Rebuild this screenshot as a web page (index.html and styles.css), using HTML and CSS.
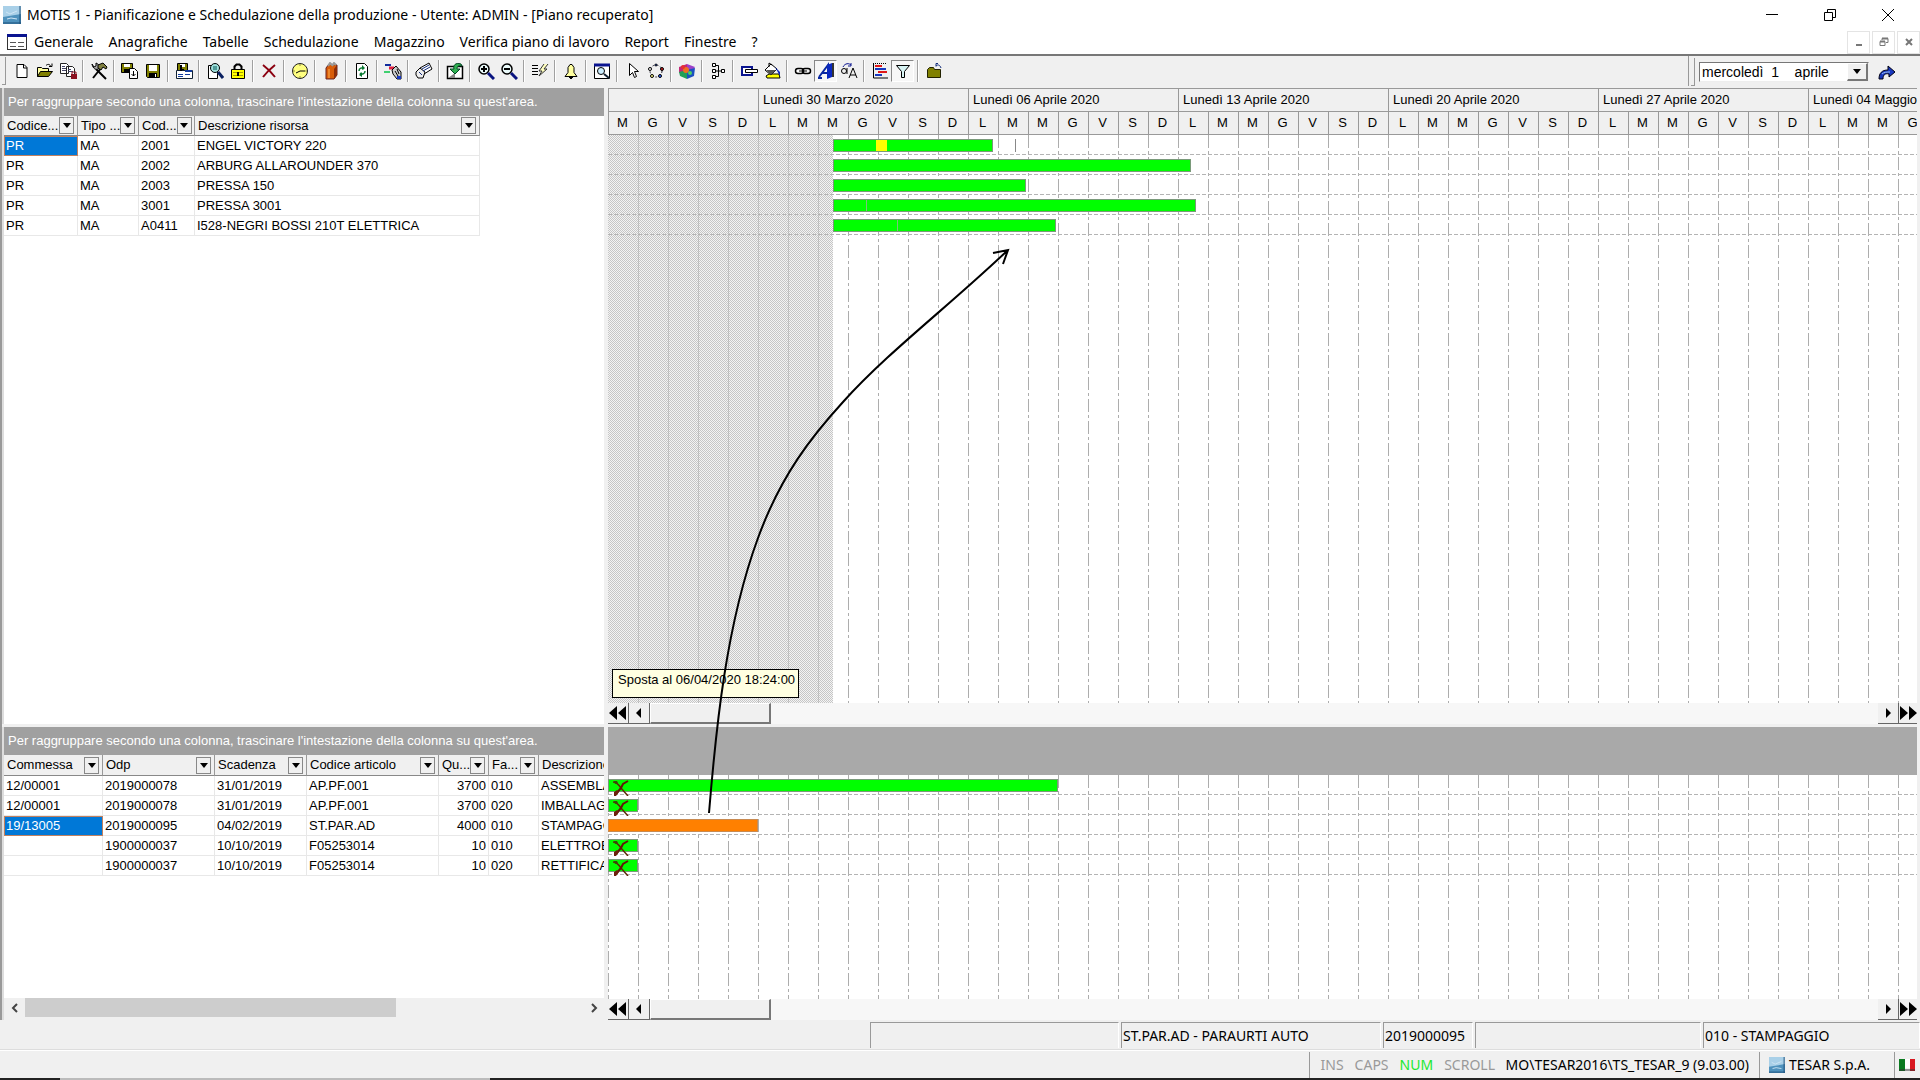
FILE: index.html
```html
<!DOCTYPE html>
<html lang="it">
<head>
<meta charset="utf-8">
<title>MOTIS 1 - Pianificazione e Schedulazione della produzione</title>
<link rel="stylesheet" href="styles.css">
</head>
<body>
<svg class="defs" aria-hidden="true">
  <symbol id="i-app" viewBox="0 0 18 18"><rect width="18" height="18" fill="#4f92bd"/><path d="M0 0h18v8L0 11z" fill="#a9d0e8"/><path d="M3 6l4 2 7-3M4 13l4-1 6 1" stroke="#cfe6f5" fill="none"/><path d="M0 17h18M17 0v18" stroke="#1d4f78" stroke-width="1"/></symbol>
  <symbol id="i-down" viewBox="0 0 8 5"><path d="M0 0h8L4 5z" fill="#000"/></symbol>
  <symbol id="i-tools" viewBox="0 0 18 16"><path d="M1 2c4 0 6 3 8 6l7 8" stroke="#5e2a08" stroke-width="1.500" fill="none"/><path d="M16 1l-5 3-2 4-5 6" stroke="#5e1a08" stroke-width="2" fill="none"/><path d="M2 12l3-2 2 2-3 4H2z" fill="#6e200c"/><path d="M2 1h3l1 2-3 1z" fill="#3a4a08"/></symbol>
  <symbol id="i-lens" viewBox="0 0 18 18"><circle cx="7" cy="7" r="5" fill="#eafafa" stroke="#000" stroke-width="1.500"/><path d="M11 11l6 6" stroke="#0a1480" stroke-width="3"/></symbol>
</svg>

<header class="titlebar">
  <svg class="app-icon"><use href="#i-app"/></svg>
  <h1>MOTIS 1 - Pianificazione e Schedulazione della produzione - Utente: ADMIN - [Piano recuperato]</h1>
  <div class="window-buttons">
    <button aria-label="Riduci a icona"><svg viewBox="0 0 12 12"><path d="M0 5.500h12" stroke="#000"/></svg></button>
    <button aria-label="Ripristina"><svg viewBox="0 0 12 12"><path d="M.5 3.500h8v8h-8zM3.500 3V.5h8v8H9" stroke="#000" fill="none"/></svg></button>
    <button aria-label="Chiudi"><svg viewBox="0 0 12 12"><path d="M0 0l12 12M12 0L0 12" stroke="#000"/></svg></button>
  </div>
</header>

<nav class="menubar">
  <svg class="menu-icon" viewBox="0 0 20 16"><rect x=".5" y=".5" width="19" height="15" fill="#fff" stroke="#333"/><path d="M0 1.500h20" stroke="#0a1490" stroke-width="3"/><path d="M3 8.500h6M11 8.500h6M3 12.500h6M11 12.500h6" stroke="#555"/></svg>
  <button>Generale</button><button>Anagrafiche</button><button>Tabelle</button><button>Schedulazione</button><button>Magazzino</button><button>Verifica piano di lavoro</button><button>Report</button><button>Finestre</button><button>?</button>
  <div class="mdi-buttons">
    <button aria-label="Riduci finestra"><svg viewBox="0 0 10 10"><path d="M2 8h6" stroke="#777" stroke-width="2"/></svg></button>
    <button aria-label="Ripristina finestra"><svg viewBox="0 0 10 10"><path d="M1 4.500h5v4H1zM3 3V1.500h6v4H7" stroke="#777" fill="none"/><path d="M1 4.500h5M3 1.500h6" stroke="#777" stroke-width="2"/></svg></button>
    <button aria-label="Chiudi finestra"><svg viewBox="0 0 10 10"><path d="M2 2l6 6M8 2L2 8" stroke="#777" stroke-width="2"/></svg></button>
  </div>
</nav>

<div class="toolbar">
  <span class="grip"></span>
  <button aria-label="Nuovo"><svg viewBox="0 0 18 18"><path d="M4 2.500h7l3 3v10H4z" fill="#fff" stroke="#000"/><path d="M10.500 3v3H14" stroke="#000" fill="none"/></svg></button>
  <button aria-label="Apri"><svg viewBox="0 0 18 18"><path d="M1.500 14.500v-9h4l1 1h6v3" fill="#ffffa0" stroke="#000"/><path d="M1.500 14.500l3-5h12l-4 5z" fill="#808000" stroke="#000"/><path d="M10 3.500c2-2 4-1 5 1m1-3v3h-3" stroke="#000" fill="none"/></svg></button>
  <button aria-label="Copia piano"><svg viewBox="0 0 18 18"><path d="M1.500 1.500h6l2 2v8h-8zM7.500 4.500h6l2 2v8h-8z" fill="#fff" stroke="#222"/><path d="M3 4.500h3M3 6.500h4M3 8.500h4M9 7.500h3M9 9.500h5" stroke="#446"/><path d="M12 12h6v5h-6z" fill="#8b1020"/><path d="M13 12v-2h4v2" stroke="#8b1020" fill="none"/></svg></button>
  <span class="sep"></span>
  <button aria-label="Strumenti"><svg viewBox="0 0 18 18"><path d="M6 7l10 10" stroke="#000" stroke-width="2"/><path d="M2 2l2 3 2-1V1c3 1 4 4 2 6-2 1-5 0-6-5z" fill="#aaa" stroke="#000"/><path d="M11 6L3 16" stroke="#000" stroke-width="2"/><path d="M8 3l5-2 4 4-1 2-3-2-2 3-3-2z" fill="#808040" stroke="#000"/></svg></button>
  <span class="sep"></span>
  <button aria-label="Salva con nome"><svg viewBox="0 0 18 18"><path d="M.5 1.500h11v9H.5z" fill="#808000" stroke="#000"/><path d="M3 2h6v3H3z" fill="#fff"/><path d="M3 7h5v4H3z"/><path d="M8.500 6.500h5l3 3v7h-8z" fill="#fff" stroke="#000"/><path d="M12.500 9v5m-2-2l2 2 2-2" stroke="#000" fill="none"/></svg></button>
  <button aria-label="Salva"><svg viewBox="0 0 18 18"><path d="M2.500 2.500h13v13h-12l-1-1z" fill="#808000" stroke="#000"/><path d="M5 3h8v6H5z" fill="#fff"/><path d="M5 11h8v5H5z"/><path d="M11 12h1v3h-1z" fill="#fff"/></svg></button>
  <span class="sep"></span>
  <button aria-label="Salva vista"><svg viewBox="0 0 18 18"><path d="M2.500 1.500h10v9h-10z" fill="#808000" stroke="#000"/><path d="M5 2h5v3H5z" fill="#fff"/><path d="M5 7h4v3H5z"/><path d="M1.500 8.500h16v8h-16z" fill="#fff" stroke="#123"/><path d="M10 9h7" stroke="#123c9c" stroke-width="2"/><path d="M3 12.500h5M10 12.500h5M3 14.500h5" stroke="#123c9c"/><path d="M5 3h2v6H5z"/></svg></button>
  <span class="sep"></span>
  <button aria-label="Cerca"><svg viewBox="0 0 18 18"><path d="M2.500 3.500h9v13h-9z" fill="#fff" stroke="#000"/><circle cx="9" cy="6" r="4.500" fill="#9fe0dc" stroke="#000"/><path d="M7 5h4M7 7h4" stroke="#055"/><path d="M12 10l5 6" stroke="#0a2060" stroke-width="3"/></svg></button>
  <button aria-label="Blocca"><svg viewBox="0 0 18 18"><path d="M5.500 8V4.500l2-2h3l2 2V8" stroke="#000" stroke-width="2" fill="none"/><path d="M2.500 7.500h13v9h-13z" fill="#ff0" stroke="#000"/><path d="M4 10.500h10M4 13.500h10" stroke="#a8a000"/><path d="M8 10h2v4H8z"/></svg></button>
  <span class="sep"></span>
  <button aria-label="Elimina"><svg viewBox="0 0 18 18"><path d="M3 3c4 3 8 7 12 12M15 3C10 7 6 11 3 15" stroke="#8b0010" stroke-width="2" fill="none"/></svg></button>
  <span class="sep"></span>
  <button aria-label="Orario"><svg viewBox="0 0 18 18"><circle cx="9" cy="9" r="7.500" fill="#ffff80" stroke="#222"/><path d="M5 11l4-2h5" stroke="#000" fill="none"/><path d="M9 2v2M9 14v2M2 9h2M14 9h2" stroke="#884"/></svg></button>
  <span class="sep"></span>
  <button aria-label="Rubrica"><svg viewBox="0 0 18 18"><path d="M4 6l3-4 8 1v10l-3 4H4z" fill="#d85c08" stroke="#622"/><path d="M12 7v10l3-4V3z" fill="#8c2c08"/><path d="M6 4l2-3 2 2M10 4l2-3 2 2" stroke="#999" stroke-width="2" fill="none"/><path d="M7 7v9" stroke="#ffb050"/></svg></button>
  <span class="sep"></span>
  <button aria-label="Aggiorna"><svg viewBox="0 0 18 18"><path d="M3.500 1.500h8l3 3v12h-11z" fill="#fff" stroke="#000"/><path d="M6 9c0-3 3-4 5-2M12 9c0 3-3 4-5 2" stroke="#087830" stroke-width="1.500" fill="none"/><path d="M9 3v5l3-2M9 10v5l-3-2" fill="#087830"/></svg></button>
  <span class="sep"></span>
  <button aria-label="Sposta attività"><svg viewBox="0 0 18 18"><path d="M1 3h6" stroke="#112c9c" stroke-width="2"/><path d="M5 6h5" stroke="#e02040" stroke-width="3"/><path d="M0 10h6" stroke="#40d070" stroke-width="2"/><path d="M8 8l4-4 5 6v7h-4l-4-5z" fill="#ccc" stroke="#000"/><path d="M11 9l3 5M13 7l2 5" stroke="#000"/><path d="M13 14h4v3h-4z" fill="#1838c0"/></svg></button>
  <span class="sep"></span>
  <button aria-label="Assegna"><svg viewBox="0 0 18 18"><path d="M5 6l9-5 3 6-8 5z" fill="#fff" stroke="#000"/><path d="M1 10l4-4 5 4-2 6H3l-2-3z" fill="#eee" stroke="#000"/><path d="M7 7l7-4M8 9l7-4M4 10l3 3" stroke="#112c7c"/></svg></button>
  <span class="sep"></span>
  <button aria-label="Importa"><svg viewBox="0 0 18 18"><path d="M1.500 4.500h15v12h-15z" fill="#fff" stroke="#000" stroke-width="1.500"/><path d="M2 16l7-5v5z" fill="#888"/><path d="M15 2C9 0 7 4 8 7H4l5 5 5-5h-3c0-2 1-4 5-3z" fill="#30b050" stroke="#042"/></svg></button>
  <span class="sep"></span>
  <button aria-label="Ingrandisci"><svg viewBox="0 0 18 18"><use href="#i-lens"/><path d="M4 7h6M7 4v6" stroke="#000" stroke-width="2"/></svg></button>
  <button aria-label="Rimpicciolisci"><svg viewBox="0 0 18 18"><use href="#i-lens"/><path d="M4 7h6" stroke="#000" stroke-width="2"/></svg></button>
  <span class="sep"></span>
  <button aria-label="Schedula"><svg viewBox="0 0 18 18"><path d="M1 3.500h6M1 6.500h6M1 9.500h6M1 12.500h6" stroke="#000"/><path d="M13 2l-5 7h3l-3 5 8-7h-3l4-5" fill="#ffffc0" stroke="#333"/></svg></button>
  <span class="sep"></span>
  <button aria-label="Avvisi"><svg viewBox="0 0 18 18"><path d="M8 2.500h2l2 3v5l3 4H3l3-4v-5z" fill="#ffffa0" stroke="#000"/><path d="M7 15h4l-2 2z" stroke="#000"/></svg></button>
  <span class="sep"></span>
  <button aria-label="Trova nel piano"><svg viewBox="0 0 18 18"><path d="M1.500 2.500h15v14h-15z" fill="#fff" stroke="#000"/><path d="M1 3h16" stroke="#0a1490" stroke-width="3"/><circle cx="8" cy="9" r="3.500" fill="#cef" stroke="#000"/><path d="M11 12l5 4" stroke="#123" stroke-width="2"/></svg></button>
  <span class="sep"></span>
  <button aria-label="Seleziona"><svg viewBox="0 0 18 18"><path d="M5.500 1.500v12l3-3 2 5 2-1-2-5h4z" fill="#fff" stroke="#000"/></svg></button>
  <button aria-label="Ciclo"><svg viewBox="0 0 18 18"><circle cx="9" cy="9" r="6" fill="none" stroke="#223" stroke-dasharray="2 2"/><g stroke="#000"><circle cx="9" cy="3" r="1" fill="#36f"/><circle cx="3" cy="7" r="1.500" fill="#fff"/><circle cx="15" cy="7" r="1.500" fill="#c22"/><circle cx="5" cy="14" r="1.500" fill="#ff8"/><circle cx="13" cy="14" r="1.500" fill="#36f"/></g></svg></button>
  <span class="sep"></span>
  <button aria-label="Colori"><svg viewBox="0 0 18 18"><path d="M1 5l8-3v7l-8 2z" fill="#c22878"/><path d="M9 2l8 3-4 6-4-2z" fill="#9c40c8"/><path d="M1 10l8-2v9l-7-3z" fill="#20a058"/><path d="M9 8l8-2-1 8-7 3z" fill="#1c50c0"/><circle cx="8" cy="8" r="3" fill="#ee7020"/><circle cx="12" cy="11" r="2" fill="#50d060"/><circle cx="5" cy="5" r="2" fill="#e83030"/></svg></button>
  <span class="sep"></span>
  <button aria-label="Struttura"><svg viewBox="0 0 18 18"><path d="M3.500 1.500h3v3h-3zM3.500 7.500h3v3h-3zM3.500 13.500h3v3h-3zM12.500 7.500h3v3h-3z" fill="#fff" stroke="#000"/><path d="M7 3.500h2.500v11H7M7 9h5" stroke="#000" fill="none"/></svg></button>
  <span class="sep"></span>
  <button aria-label="Barra"><svg viewBox="0 0 18 18"><path d="M2 5h10v8H2z" fill="#fff" stroke="#0a1490" stroke-width="2"/><path d="M5.500 7.500h12v3h-12z" fill="#fff" stroke="#000"/></svg></button>
  <button aria-label="Riempi"><svg viewBox="0 0 18 18"><path d="M3 14l3-2h10l1 4H4z" fill="#ff0" stroke="#000"/><path d="M2 8l6-6 6 5-6 6z" fill="#fff" stroke="#000"/><path d="M3 8h10l-5 5z" fill="#555"/><path d="M12 5l5 5v4z" fill="#0a28c0"/><path d="M6 5V1l3 2" stroke="#000" fill="none"/></svg></button>
  <span class="sep"></span>
  <button aria-label="Collega"><svg viewBox="0 0 18 18"><rect x="1.500" y="6.500" width="8" height="5" rx="2.500" fill="#fff" stroke="#000" stroke-width="1.500"/><rect x="8.500" y="6.500" width="8" height="5" rx="2.500" fill="none" stroke="#000" stroke-width="1.500"/><path d="M5 9h8" stroke="#000"/></svg></button>
  <button class="pressed" aria-label="Testo" aria-pressed="true"><svg viewBox="0 0 18 18"><path d="M1 16h4M2 15L11 3v12M5 11h6" stroke="#0a28a0" stroke-width="2" fill="none"/><path d="M10 3l5-2v14l-5 2z" fill="#0a28c0"/><path d="M15 1h2v14h-2z" fill="#333"/></svg></button>
  <button aria-label="Maiuscole"><svg viewBox="0 0 18 18"><path d="M3 5c2-4 6-4 8-2m0-2v3H8" stroke="#0a1490" fill="none"/><circle cx="4" cy="9" r="2.500" fill="none" stroke="#000"/><path d="M7 6v6M9 16l4-10 4 10M10 13h6" stroke="#000" fill="none"/></svg></button>
  <span class="sep"></span>
  <button aria-label="Diagramma"><svg viewBox="0 0 18 18"><path d="M2 1.500h14" stroke="#000" stroke-dasharray="1 1"/><path d="M2.500 2v14H17" stroke="#000" fill="none"/><path d="M4 4h7M7 10h9" stroke="#e01818" stroke-width="2"/><path d="M4 7h11M4 13h7" stroke="#1838c0" stroke-width="2"/></svg></button>
  <button class="pressed" aria-label="Filtro" aria-pressed="true"><svg viewBox="0 0 18 18"><path d="M2.500 3.500h13l-5 6v6h-3v-6z" fill="#d8f4f4" stroke="#000"/></svg></button>
  <span class="sep"></span>
  <button aria-label="Esci"><svg viewBox="0 0 18 18"><path d="M2.500 15.500v-8l2-2h4l1 2h6v8z" fill="#808000" stroke="#220"/><path d="M11 4c2-2 4-1 5 2M13 1.500h-2v3" stroke="#112c7c" fill="none"/></svg></button>

  <div class="date-group">
    <span class="grip"></span>
    <div class="date-box">
      <input type="text" aria-label="Data" value="mercoledì  1    aprile">
      <button aria-label="Apri calendario"><svg viewBox="0 0 8 5"><use href="#i-down"/></svg></button>
    </div>
    <button class="go" aria-label="Vai alla data"><svg viewBox="0 0 18 16"><path d="M1 15C1 9 4 6 10 6V2l7 6-6 5v-3c-4-1-6 1-6 5z" fill="#1838c0" stroke="#001"/><path d="M4 10c2-2 5-2 8-2" stroke="#9cc0f0" fill="none"/></svg></button>
  </div>
</div>

<main class="workspace">
  <section class="pane">
    <p class="group-hint">Per raggruppare secondo una colonna, trascinare l'intestazione della colonna su quest'area.</p>
    <table class="grid resources">
      <colgroup><col class="c74"><col class="c61"><col class="c56"><col class="c285"></colgroup>
      <thead><tr>
        <th><div>Codice...<button aria-label="Filtra codice"><svg><use href="#i-down"/></svg></button></div></th>
        <th><div>Tipo ...<button aria-label="Filtra tipo"><svg><use href="#i-down"/></svg></button></div></th>
        <th><div>Cod...<button aria-label="Filtra cod"><svg><use href="#i-down"/></svg></button></div></th>
        <th><div>Descrizione risorsa<button aria-label="Filtra descrizione"><svg><use href="#i-down"/></svg></button></div></th>
      </tr></thead>
      <tbody>
        <tr><td class="selected">PR</td><td>MA</td><td>2001</td><td>ENGEL VICTORY 220</td></tr>
        <tr><td>PR</td><td>MA</td><td>2002</td><td>ARBURG ALLAROUNDER 370</td></tr>
        <tr><td>PR</td><td>MA</td><td>2003</td><td>PRESSA 150</td></tr>
        <tr><td>PR</td><td>MA</td><td>3001</td><td>PRESSA 3001</td></tr>
        <tr><td>PR</td><td>MA</td><td>A0411</td><td>I528-NEGRI BOSSI 210T ELETTRICA</td></tr>
      </tbody>
    </table>
  </section>

  <section class="gantt">
    <div class="weeks"><span class="part"></span><span>Lunedì 30 Marzo 2020</span><span>Lunedì 06 Aprile 2020</span><span>Lunedì 13 Aprile 2020</span><span>Lunedì 20 Aprile 2020</span><span>Lunedì 27 Aprile 2020</span><span>Lunedì 04 Maggio</span></div>
    <div class="days"><span>M</span><span>G</span><span>V</span><span>S</span><span>D</span><span>L</span><span>M</span><span>M</span><span>G</span><span>V</span><span>S</span><span>D</span><span>L</span><span>M</span><span>M</span><span>G</span><span>V</span><span>S</span><span>D</span><span>L</span><span>M</span><span>M</span><span>G</span><span>V</span><span>S</span><span>D</span><span>L</span><span>M</span><span>M</span><span>G</span><span>V</span><span>S</span><span>D</span><span>L</span><span>M</span><span>M</span><span>G</span><span>V</span><span>S</span><span>D</span><span>L</span><span>M</span><span>M</span><span>G</span></div>
    <div class="chart past">
      <div class="lane"><i class="bar" style="margin-left:225px;width:160px"><b class="setup" style="margin-left:42px;width:11px"></b></i><i class="tick" style="margin-left:22px"></i></div>
      <div class="lane"><i class="bar" style="margin-left:225px;width:358px"></i></div>
      <div class="lane"><i class="bar" style="margin-left:225px;width:193px"></i></div>
      <div class="lane"><i class="bar" style="margin-left:225px;width:363px"><b class="split" style="margin-left:32px"></b></i></div>
      <div class="lane"><i class="bar" style="margin-left:225px;width:223px"><b class="split" style="margin-left:63px"></b></i></div>
      <div class="tooltip" role="tooltip">Sposta al 06/04/2020 18:24:00</div>
    </div>
    <div class="timescroll">
      <button aria-label="Inizio"><svg viewBox="0 0 18 14"><path d="M8 0v14L0 7zM17 0v14L9 7z"/></svg></button><button aria-label="Indietro"><svg viewBox="0 0 18 14"><path d="M11 2v10L6 7z"/></svg></button><span class="thumb"></span><button class="end" aria-label="Avanti"><svg viewBox="0 0 18 14"><path d="M7 2v10l5-5z"/></svg></button><button class="last" aria-label="Fine"><svg viewBox="0 0 18 14"><path d="M1 0v14l8-7zM10 0v14l8-7z"/></svg></button>
    </div>
  </section>

  <section class="pane">
    <p class="group-hint">Per raggruppare secondo una colonna, trascinare l'intestazione della colonna su quest'area.</p>
    <div class="grid-clip">
    <table class="grid orders">
      <colgroup><col class="c99"><col class="c112"><col class="c92"><col class="c132"><col class="c50"><col class="c50"><col class="c132"></colgroup>
      <thead><tr>
        <th><div>Commessa<button aria-label="Filtra commessa"><svg><use href="#i-down"/></svg></button></div></th>
        <th><div>Odp<button aria-label="Filtra odp"><svg><use href="#i-down"/></svg></button></div></th>
        <th><div>Scadenza<button aria-label="Filtra scadenza"><svg><use href="#i-down"/></svg></button></div></th>
        <th><div>Codice articolo<button aria-label="Filtra articolo"><svg><use href="#i-down"/></svg></button></div></th>
        <th><div>Qu...<button aria-label="Filtra quantità"><svg><use href="#i-down"/></svg></button></div></th>
        <th><div>Fa...<button aria-label="Filtra fase"><svg><use href="#i-down"/></svg></button></div></th>
        <th><div>Descrizione</div></th>
      </tr></thead>
      <tbody>
        <tr><td>12/00001</td><td>2019000078</td><td>31/01/2019</td><td>AP.PF.001</td><td class="num">3700</td><td>010</td><td>ASSEMBLAGGIO</td></tr>
        <tr><td>12/00001</td><td>2019000078</td><td>31/01/2019</td><td>AP.PF.001</td><td class="num">3700</td><td>020</td><td>IMBALLAGGIO</td></tr>
        <tr><td class="selected">19/13005</td><td>2019000095</td><td>04/02/2019</td><td>ST.PAR.AD</td><td class="num">4000</td><td>010</td><td>STAMPAGGIO</td></tr>
        <tr><td></td><td>1900000037</td><td>10/10/2019</td><td>F05253014</td><td class="num">10</td><td>010</td><td>ELETTROEROSIONE</td></tr>
        <tr><td></td><td>1900000037</td><td>10/10/2019</td><td>F05253014</td><td class="num">10</td><td>020</td><td>RETTIFICA</td></tr>
      </tbody>
    </table>
    </div>
    <div class="hscroll">
      <button aria-label="Scorri a sinistra"><svg viewBox="0 0 8 10"><path d="M6 1L2 5l4 4" stroke="#444" stroke-width="2" fill="none"/></svg></button><span class="thumb"></span><button class="end" aria-label="Scorri a destra"><svg viewBox="0 0 8 10"><path d="M2 1l4 4-4 4" stroke="#444" stroke-width="2" fill="none"/></svg></button>
    </div>
  </section>

  <section class="gantt">
    <div class="cover"></div>
    <div class="chart">
      <div class="lane"><i class="bar" style="width:450px"><svg><use href="#i-tools"/></svg></i></div>
      <div class="lane"><i class="bar" style="width:30px"><svg><use href="#i-tools"/></svg></i></div>
      <div class="lane"><i class="bar moving" style="width:150px"></i></div>
      <div class="lane"><i class="bar" style="width:30px"><svg><use href="#i-tools"/></svg></i></div>
      <div class="lane"><i class="bar" style="width:30px"><svg><use href="#i-tools"/></svg></i></div>
    </div>
    <div class="timescroll">
      <button aria-label="Inizio"><svg viewBox="0 0 18 14"><path d="M8 0v14L0 7zM17 0v14L9 7z"/></svg></button><button aria-label="Indietro"><svg viewBox="0 0 18 14"><path d="M11 2v10L6 7z"/></svg></button><span class="thumb"></span><button class="end" aria-label="Avanti"><svg viewBox="0 0 18 14"><path d="M7 2v10l5-5z"/></svg></button><button class="last" aria-label="Fine"><svg viewBox="0 0 18 14"><path d="M1 0v14l8-7zM10 0v14l8-7z"/></svg></button>
    </div>
  </section>

  <svg class="move-arrow" viewBox="700 240 320 580" aria-hidden="true"><path d="M709 813C716 728 726 625 758 538C781 475 812 436 843 402C888 352 948 307 1008 250M993 253l15-3-5 14" fill="none" stroke="#000" stroke-width="2"/></svg>
</main>

<footer>
  <div class="status plan"><span></span><span>ST.PAR.AD - PARAURTI AUTO</span><span>2019000095</span><span></span><span>010 - STAMPAGGIO</span></div>
  <div class="status system">
    <div class="keys"><span>INS</span><span>CAPS</span><span class="on">NUM</span><span>SCROLL</span></div>
    <div class="path"><span>MO\TESAR2016\TS_TESAR_9 (9.03.00)</span></div>
    <div class="company"><svg class="small-icon"><use href="#i-app"/></svg>TESAR S.p.A.</div>
    <div class="flag"><svg viewBox="0 0 16 12"><path d="M0 0h6v12H0z" fill="#0a7a20"/><path d="M6 0h5v9H6z" fill="#fff"/><path d="M11 0h5v12h-5z" fill="#d81820"/><path d="M0 11h16" stroke="#333"/></svg></div>
  </div>
  <div class="edge"></div>
</footer>
</body>
</html>
```
FILE: styles.css
```css
* { box-sizing: border-box; }
body {
  margin: 0;
  min-height: 100vh;
  display: flex;
  flex-direction: column;
  overflow: hidden;
  background: #f0f0f0;
  color: #000;
  font: 13px/20px "Liberation Sans", Arial, sans-serif;
}
button {
  margin: 0;
  padding: 0;
  border: 0;
  background: none;
  color: inherit;
  font: inherit;
  display: flex;
  align-items: center;
  justify-content: center;
}
.defs { display: none; }

/* Title and menu */
.titlebar, .menubar {
  display: flex;
  align-items: center;
  background: #fff;
  font-family: "Noto Sans", "Open Sans", sans-serif;
  font-size: 14px;
}
.titlebar { height: 30px; padding-left: 3px; }
.titlebar h1 { margin: 0 0 0 6px; font-size: 14px; font-weight: 400; white-space: nowrap; }
.app-icon { width: 18px; height: 18px; }
.window-buttons { display: flex; margin-left: auto; padding-right: 3px; }
.window-buttons button { width: 58px; height: 28px; }
.window-buttons svg { width: 12px; height: 12px; }
.menubar { height: 24px; padding-left: 7px; gap: 15px; white-space: nowrap; }
.menu-icon { width: 20px; height: 16px; margin-right: -8px; }
.mdi-buttons { display: flex; gap: 2px; margin-left: auto; }
.mdi-buttons button { width: 23px; height: 23px; border: 1px solid #e4e4e4; }
.mdi-buttons svg { width: 10px; height: 10px; }

/* Toolbar */
.toolbar {
  display: flex;
  align-items: center;
  height: 34px;
  border-top: 2px solid #777;
  padding: 0 0 2px 2px;
}
.toolbar > button { flex: none; width: 23px; height: 22px; }
.toolbar > button svg { width: 18px; height: 18px; }
.toolbar > .pressed { border: 1px solid #fff; border-top-color: #888; border-left-color: #888; background: #f7f7f7; }
.grip { width: 4px; height: 28px; margin-right: 4px; border-right: 1px solid #999; border-bottom: 1px solid #999; }
.sep { flex: none; width: 2px; height: 22px; margin: 0 3px; border-left: 1px solid #a0a0a0; border-right: 1px solid #fff; }
.date-group { display: flex; align-items: center; align-self: stretch; width: 232px; margin-left: auto; border-left: 1px solid #999; padding: 2px 0 0 2px; }
.date-box { display: flex; width: 170px; height: 20px; background: #fff; border: 1px solid #777; border-right-color: #eee; border-bottom-color: #eee; }
.date-box input { flex: 1; min-width: 0; border: 0; padding: 0 2px; background: none; font: 14px/18px "Liberation Sans", Arial, sans-serif; }
.date-box button { width: 21px; background: #f0f0f0; border: 1px solid #fff; border-right: 2px solid #777; border-bottom: 2px solid #777; }
.date-box svg { width: 8px; height: 5px; }
.go { margin-left: 9px; }
.go svg { width: 18px; height: 16px; }

/* Work area */
.workspace {
  position: relative;
  flex: 1;
  display: grid;
  grid-template-columns: 602px minmax(0, 1fr);
  grid-template-rows: minmax(0, 636fr) minmax(0, 293fr);
  gap: 3px 4px;
  padding-right: 3px;
  border-left: 2px solid #999;
}
.pane, .gantt { display: flex; flex-direction: column; min-width: 0; overflow: hidden; background: #fff; }
.pane { border-left: 2px solid #ddd; }
.group-hint { margin: 0; height: 28px; padding-left: 4px; background: #a0a0a0; color: #fff; line-height: 28px; white-space: nowrap; }
.grid-clip { flex: 1; overflow: hidden; }
.grid { border-collapse: separate; border-spacing: 0; table-layout: fixed; text-align: left; }
.resources { width: 476px; }
.orders { width: 667px; }
.c50 { width: 50px; } .c56 { width: 56px; } .c61 { width: 61px; } .c74 { width: 74px; }
.c92 { width: 92px; } .c99 { width: 99px; } .c112 { width: 112px; } .c132 { width: 132px; } .c285 { width: 285px; }
.grid th { padding: 0; background: #f0f0f0; border-right: 1px solid #999; border-bottom: 1px solid #888; font-weight: 400; white-space: nowrap; overflow: hidden; }
.grid th div { display: flex; align-items: center; height: 20px; padding: 0 3px; }
.resources th div { height: 19px; }
.grid th button { flex: none; width: 15px; height: 17px; margin-left: auto; border: 1px solid #888; background: #f0f0f0; }
.grid th svg { width: 8px; height: 5px; }
.grid td { height: 20px; padding: 0 2px; line-height: 19px; border-right: 1px solid #e8e8e8; border-bottom: 1px solid #e8e8e8; white-space: nowrap; overflow: hidden; }
.grid .selected { background: #0078d7; color: #fff; outline: 1px solid #c08060; outline-offset: -1px; }
.grid .num { text-align: right; }

.hscroll { display: flex; height: 22px; padding-bottom: 3px; background: #f0f0f0; }
.hscroll button { width: 21px; }
.hscroll svg { width: 8px; height: 10px; }
.hscroll .thumb { width: 371px; background: #cdcdcd; }
.hscroll .end { margin-left: auto; }

/* Timeline */
.weeks, .days { display: flex; overflow: hidden; background: #f0f0f0; white-space: nowrap; border-left: 1px solid #999; flex: none; }
.weeks { height: 24px; border-top: 1px solid #999; border-bottom: 1px solid #999; }
.weeks span { flex: none; width: 210px; padding-left: 4px; line-height: 22px; border-right: 1px solid #999; }
.weeks .part { width: 150px; }
.days { height: 23px; border-bottom: 1px solid #999; }
.days span { flex: none; width: 30px; padding-right: 2px; text-align: center; line-height: 22px; border-right: 1px solid #999; }
.cover { flex: none; height: 48px; background: #a9a9a9; }
.chart {
  position: relative;
  flex: 1;
  background:
    repeating-linear-gradient(to bottom, transparent 0 13px, #fff 13px 16px, transparent 16px 19px, #fff 19px 22px),
    linear-gradient(to right, #adadad 1px, transparent 1px) 0 0 / 30px 100%,
    #fff;
}
/* Days before the plan start are hatched, the rest of the chart is white */
.past {
  background:
    linear-gradient(to bottom, #bcbcbc 13px, transparent 13px 16px, #bcbcbc 16px 19px, transparent 19px) 30px 0 / 30px 22px,
    repeating-conic-gradient(#c6c6c6 0 25%, #f4f4f4 0 50%) 0 0 / 2px 2px;
}
.past {
  background:
    repeating-conic-gradient(#c6c6c6 0 25%, #f4f4f4 0 50%) 0 0 / 2px 2px;
}
.past::before, .past::after {
  content: "";
  position: absolute;
  inset: 0 0 0 225px;
  background:
    repeating-linear-gradient(to bottom, transparent 0 13px, #fff 13px 16px, transparent 16px 19px, #fff 19px 22px),
    linear-gradient(to right, #adadad 1px, transparent 1px) 15px 0 / 30px 100%,
    #fff;
}
.past::after {
  inset: 0 auto 0 0;
  width: 225px;
  z-index: 0;
  opacity: .4;
  background: repeating-linear-gradient(to right, transparent 0 30px, #999 30px 31px, transparent 31px 60px, #999 60px 61px, transparent 61px 90px, #999 90px 91px, transparent 91px 120px, #999 120px 121px, transparent 121px 150px, #999 150px 151px, transparent 151px 180px, #999 180px 181px, transparent 181px 210px, #999 210px 211px, transparent 211px 225px);
}
.lane {
  position: relative;
  display: flex;
  height: 20px;
  padding-top: 4px;
  background: repeating-linear-gradient(to right, #b4b4b4 0 4px, transparent 4px 6px) 0 100% / 100% 1px no-repeat;
}
.bar { display: flex; flex: none; height: 13px; background: #0f0; border: 1px solid #7a9a7a; }
.moving { background: #ff8000; border-color: #c98a50; }
.setup { background: #ff0; }
.split { width: 1px; background: #7fbf7f; }
.tick { width: 1px; height: 13px; background: #888; }
.bar svg { flex: none; width: 18px; height: 16px; margin-left: 3px; }
.tooltip { position: absolute; z-index: 1; left: 4px; bottom: 5px; width: 187px; height: 29px; padding-left: 5px; line-height: 20px; background: #ffffe1; border: 1px solid #000; white-space: nowrap; }
.timescroll { display: flex; flex: none; height: 21px; background: #f7f7f7; }
.timescroll button { flex: none; width: 21px; background: #f0f0f0; border-right: 1px solid #666; border-bottom: 1px solid #666; }
.timescroll svg { width: 18px; height: 14px; }
.timescroll .thumb { width: 121px; background: #f0f0f0; border: 1px solid #fff; border-right: 2px solid #777; border-bottom: 2px solid #777; }
.timescroll .end { margin-left: auto; }
.timescroll .last { width: 18px; border-right: 0; }
.move-arrow { position: absolute; z-index: 2; left: 698px; top: 152px; width: 320px; height: 580px; pointer-events: none; }

/* Status bars */
footer { font: 14px/20px "Noto Sans", "Open Sans", sans-serif; }
.status { display: flex; white-space: nowrap; }
.plan { height: 30px; padding-top: 2px; gap: 2px; justify-content: flex-end; border-bottom: 1px solid #ddd; }
.plan span { height: 26px; padding-left: 1px; line-height: 25px; border-top: 1px solid #999; border-left: 1px solid #999; border-right: 1px solid #fff; }
.plan span:nth-child(1) { width: 249px; }
.plan span:nth-child(2) { width: 260px; }
.plan span:nth-child(3) { width: 90px; }
.plan span:nth-child(4) { width: 226px; }
.plan span:nth-child(5) { width: 217px; }
.system { height: 28px; border-top: 1px solid #fff; justify-content: flex-end; align-items: center; line-height: 26px; }
.keys { display: flex; gap: 11px; padding-left: 11px; border-left: 1px solid #999; color: #999; }
.keys .on { color: #20e830; }
.path { display: flex; justify-content: flex-end; width: 244px; margin-left: 10px; overflow: hidden; }
.company { display: flex; align-items: center; gap: 4px; width: 135px; margin-left: 10px; padding-left: 9px; border-left: 1px solid #999; }
.small-icon { width: 16px; height: 16px; }
.flag { display: flex; align-items: center; height: 26px; width: 26px; padding-left: 4px; border-left: 1px solid #999; }
.flag svg { width: 16px; height: 12px; }
.edge { height: 2px; background: linear-gradient(to right, #222 0 60px, #bbb 60px 490px, #222 490px); }
```
